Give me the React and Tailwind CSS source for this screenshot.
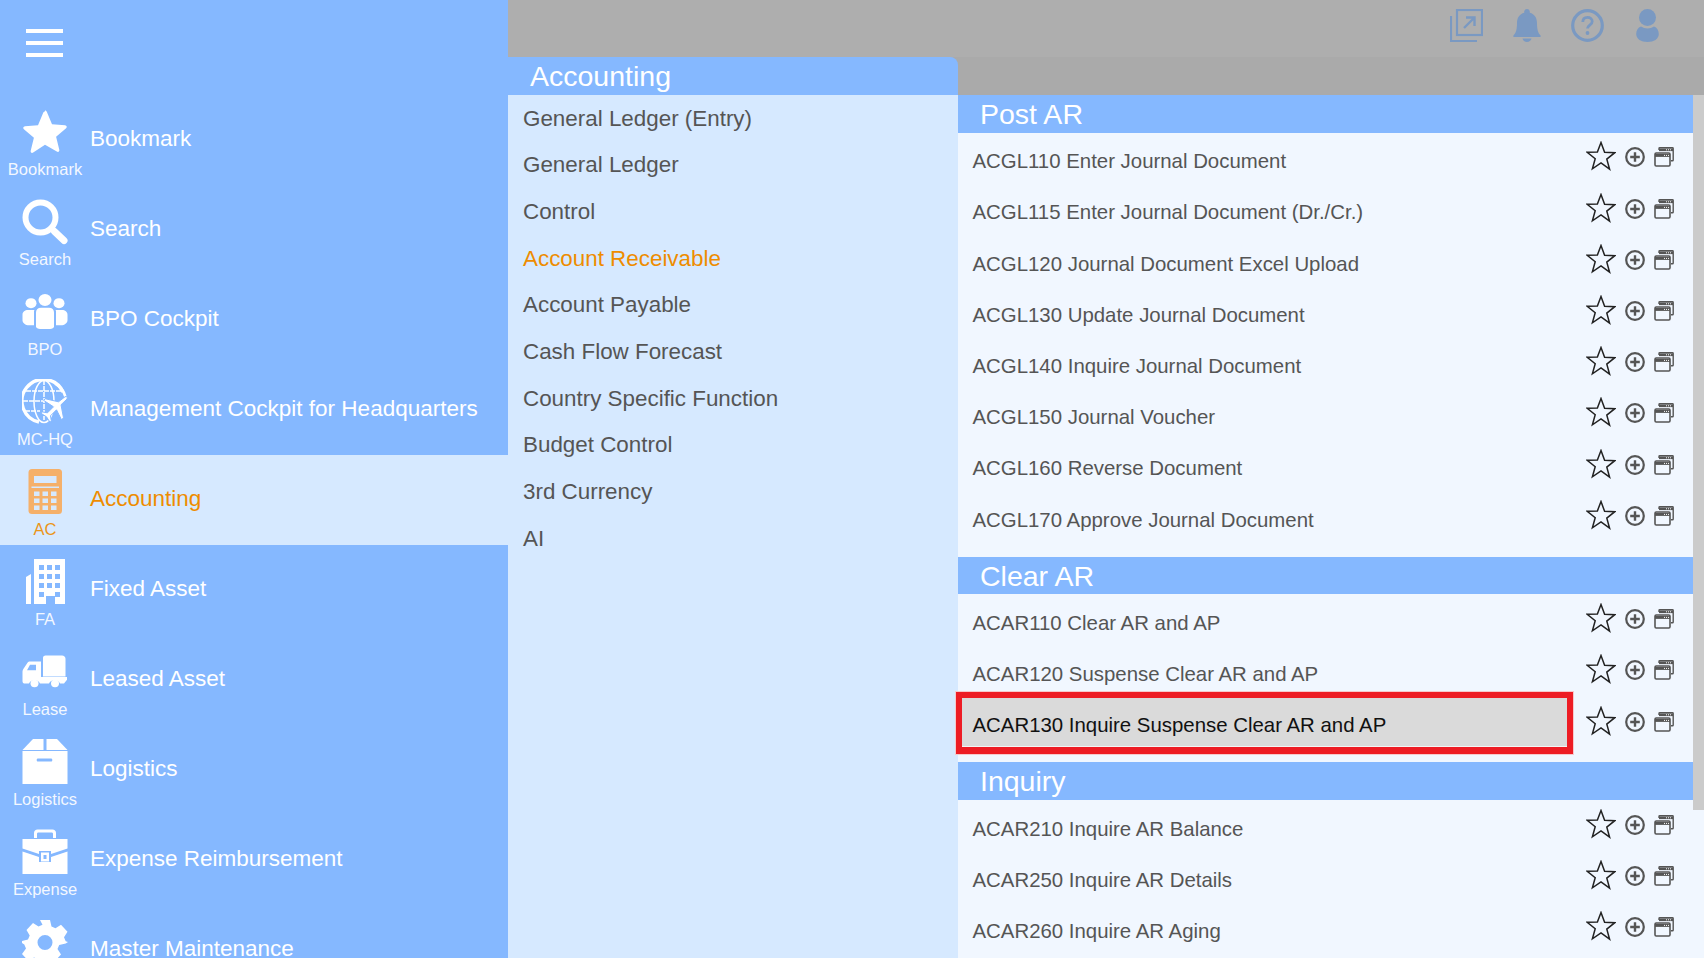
const NAV = [
  { label: "Bookmark", small: "Bookmark", icon: "star" },
  { label: "Search", small: "Search", icon: "search" },
  { label: "BPO Cockpit", small: "BPO", icon: "people" },
  { label: "Management Cockpit for Headquarters", small: "MC-HQ", icon: "globe" },
  { label: "Accounting", small: "AC", icon: "calc", active: true },
  { label: "Fixed Asset", small: "FA", icon: "building" },
  { label: "Leased Asset", small: "Lease", icon: "truck" },
  { label: "Logistics", small: "Logistics", icon: "box" },
  { label: "Expense Reimbursement", small: "Expense", icon: "case" },
  { label: "Master Maintenance", small: "Master", icon: "gear" },
];

const MENU = [
  "General Ledger (Entry)",
  "General Ledger",
  "Control",
  "Account Receivable",
  "Account Payable",
  "Cash Flow Forecast",
  "Country Specific Function",
  "Budget Control",
  "3rd Currency",
  "AI",
];

const SECTIONS = [
  {
    title: "Post AR",
    rows: [
      "ACGL110 Enter Journal Document",
      "ACGL115 Enter Journal Document (Dr./Cr.)",
      "ACGL120 Journal Document Excel Upload",
      "ACGL130 Update Journal Document",
      "ACGL140 Inquire Journal Document",
      "ACGL150 Journal Voucher",
      "ACGL160 Reverse Document",
      "ACGL170 Approve Journal Document",
    ],
  },
  {
    title: "Clear AR",
    rows: ["ACAR110 Clear AR and AP", "ACAR120 Suspense Clear AR and AP", "ACAR130 Inquire Suspense Clear AR and AP"],
  },
  {
    title: "Inquiry",
    rows: ["ACAR210 Inquire AR Balance", "ACAR250 Inquire AR Details", "ACAR260 Inquire AR Aging"],
  },
];

function NavIcon({ name }) {
  const c = "w-[46px] h-[46px] block";
  switch (name) {
    case "star":
      return (
        <svg viewBox="0 0 46 46" className={c} fill="#fff">
          <path d="M23 1.500c1 0 1.600.7 2 1.700l5 12 13 1c1.800.2 2.400 1.800 1.100 3l-10 8.600 3.200 13c.4 1.700-1 2.700-2.500 1.800L23 35.800l-11.800 7.800c-1.500.9-2.900-.1-2.500-1.800l3.200-13-10-8.600c-1.300-1.200-.7-2.800 1.100-3l13-1 5-12c.4-1 1-1.700 2-1.700z" />
        </svg>
      );
    case "search":
      return (
        <svg viewBox="0 0 46 46" className={c} fill="none" stroke="#fff">
          <circle cx="18.500" cy="18.500" r="15" strokeWidth="6" />
          <path d="M32.500 32.500L42 41.500" strokeWidth="7" strokeLinecap="round" />
        </svg>
      );
    case "people":
      return (
        <svg viewBox="0 0 46 46" className={c} fill="#fff">
          <g transform="translate(0,5) scale(1,0.92)">
            <circle cx="9" cy="10" r="5.500" />
            <circle cx="23" cy="6.500" r="6.500" />
            <circle cx="37" cy="10" r="5.500" />
            <path d="M14 20c0-3 2-5 5-5h8c3 0 5 2 5 5v15c0 2-2 3-4 3H18c-2 0-4-1-4-3z" />
            <path d="M11.500 17.500H6c-3 0-5.500 2-5.500 5v6c0 3 3 5.500 6.500 5.500h5V19c0-.6 0-1 .5-1.500z" />
            <path d="M34.500 17.500H40c3 0 5.500 2 5.500 5v6c0 3-3 5.500-6.500 5.500h-5V19c0-.6 0-1-.5-1.500z" />
          </g>
        </svg>
      );
    case "globe":
      return (
        <svg viewBox="0 0 46 46" className={c} fill="none" stroke="#fff">
          <path d="M41 13A21.500 21.500 0 1 0 17 43" strokeWidth="3.400" />
          <path d="M33 4.500A21.500 21.500 0 0 1 43.500 18" strokeWidth="2.600" />
          <ellipse cx="22" cy="22.500" rx="10" ry="21" strokeWidth="1.500" />
          <path d="M22 1v40M4 12h36M1 22h25M3 32h15" strokeWidth="1.500" strokeDasharray="5 1" />
          <path
            d="M45 20c1-1.600-.5-3.200-2-2.200l-6.500 5-13-3-2 1.500 10 6.500-6 6-5-.8-1.500 1.300 5.500 3.500 3.500 5.500 1.300-1.500-.8-5 6-6 5 10 2-2-2.500-13z"
            fill="#fff"
            stroke="#85b8ff"
            strokeWidth="1"
          />
        </svg>
      );
    case "calc":
      return (
        <svg viewBox="0 0 46 46" className={c}>
          <rect x="6.500" y="0" width="33.500" height="45" rx="3.500" fill="#f5b06a" />
          <rect x="12" y="7" width="22.500" height="7" fill="#d6e9ff" />
          <rect x="9.500" y="17.500" width="27.500" height="1.500" fill="#d6e9ff" />
          {[22.5, 29.5, 36.5].map((y) =>
            [12, 20.5, 29].map((x) => <rect key={`${x}-${y}`} x={x} y={y} width="5.500" height="4.500" fill="#d6e9ff" />)
          )}
        </svg>
      );
    case "building":
      return (
        <svg viewBox="0 0 46 46" className={c} fill="#fff">
          <path d="M4 18l5-3v30H4z" />
          <path
            fillRule="evenodd"
            d="M12 0h31v45H33v-8h-9v8H12z M17 6v5h5V6z M25 6v5h5V6z M33 6v5h5V6z M17 15v5h5v-5z M25 15v5h5v-5z M33 15v5h5v-5z M17 24v5h5v-5z M25 24v5h5v-5z M33 24v5h5v-5z M17 33v5h5v-5z M33 33v5h5v-5z"
          />
        </svg>
      );
    case "truck":
      return (
        <svg viewBox="0 0 46 46" className={c} fill="#fff">
          <g transform="translate(0,6) scale(1,0.92)">
            <path d="M21 3c0-1.500 1-2.500 2.500-2.500H40c2 0 3.500 1.500 3.500 3.500v19.500H21z" />
            <path
              fillRule="evenodd"
              d="M8 7h11v17h26v3l-3 4h-4a6 6 0 0 0-11 0H18a6 6 0 0 0-11 0H3c-1.500 0-2.500-1-2.500-2.500V18c0-1 .3-2 1-3l4-6.500C6 7.500 7 7 8 7zM8 10.500L5 16.500h9v-6z"
            />
            <circle cx="12.500" cy="31" r="4" />
            <circle cx="33" cy="31" r="4" />
          </g>
        </svg>
      );
    case "box":
      return (
        <svg viewBox="0 0 46 46" className={c} fill="#fff">
          <path d="M11 0h10.500v11H.5z" />
          <path d="M24.500 0H35l10.500 11h-21z" />
          <path
            fillRule="evenodd"
            d="M.5 12h45v33H.5zM16 19.500c-.8 0-1.300.5-1.300 1.500s.5 1.500 1.300 1.500h13c.8 0 1.300-.5 1.300-1.500s-.5-1.500-1.300-1.500z"
          />
        </svg>
      );
    case "case":
      return (
        <svg viewBox="0 0 46 46" className={c} fill="#fff">
          <path d="M12 9V4c0-2 1.500-3.500 3.500-3.500h15C32.500.5 34 2 34 4v5h-3V5c0-1-.5-1.500-1.500-1.500h-13C15.500 3.500 15 4 15 5v4z" />
          <path d="M.5 10h45v9.500L29 25v-3H17v3L.5 19.500z" />
          <path fillRule="evenodd" d="M19 23.500h8v9h-8zM21.500 26v4h3v-4z" />
          <path d="M.5 22.500L17 28v5h12v-5l16.500-5.500V45H.5z" />
        </svg>
      );
    default:
      return (
        <svg viewBox="0 0 46 46" className={c} fill="#fff">
          <path
            fillRule="evenodd"
            d="M18 1h10l1.500 6.500 4 1.700 5.500-3.500 6.500 7-3.500 5.500 1.700 4L46 23v0l-2.300 1.500-6.500 1.500-1.700 4 3.500 5.500-6.500 7-5.500-3.500-4 1.700L20.500 46h-3l-1.500-5.800-4-1.700-5.500 3.500-6.500-7L4 29.500l-1.700-4L0 24v-2l6-1.500 1.700-4L4.500 11l6.500-7 5.500 3.500 4-1.700zM23 16a7.500 7.500 0 1 0 0 15 7.500 7.500 0 0 0 0-15z"
          />
        </svg>
      );
  }
}

function RowIcons() {
  return (
    <div className="flex items-start h-[30px] ml-auto mr-[19px] -mt-[10px]">
      <svg viewBox="0 0 30 30" className="w-[30px] h-[30px]" fill="none" stroke="#222" strokeWidth="1.500" strokeLinejoin="miter">
        <path d="M15 1.500l3.600 9.800 10.200.4-8 6.400 2.800 10.100L15 22l-8.600 5.800 2.800-10.100-8-6.400 10.200-.4z" />
      </svg>
      <svg viewBox="0 0 20 20" className="w-[20px] h-[20px] ml-[9px] mt-[6px]" fill="none" stroke="#555" strokeWidth="2.200">
        <circle cx="10" cy="10" r="8.800" />
        <path d="M10 5.200v9.600M5.200 10h9.600" strokeWidth="2.400" />
      </svg>
      <svg viewBox="0 0 20 20" className="w-[20px] h-[20px] ml-[9px] mt-[6px]" fill="none" stroke="#555">
        <path d="M5 3V1.500c0-.4.3-.7.700-.7h12.800c.4 0 .7.300.7.700V13c0 .5-.3.800-.7.800H17" strokeWidth="1.400" />
        <path d="M5 2.800h14" strokeWidth="2.600" />
        <rect x="1" y="6" width="15" height="13" rx="1.200" strokeWidth="1.600" />
        <path d="M1 8.400h15" strokeWidth="3" />
        <path d="M10 8.400h1M12 8.400h1M14 8.400h1M12 2.800h1M14 2.800h1M16 2.800h1" stroke="#fff" strokeWidth="1" />
      </svg>
    </div>
  );
}

function Row({ text, highlighted }) {
  return (
    <div className="relative flex items-center h-[51.2px] pl-[14.500px]">
      {highlighted && (
        <div className="absolute -left-[2px] -top-[8px] w-[617px] h-[62px] border-x-[6px] border-t-[6px] border-b-[7px] border-[#ed1c24] bg-[#dadada] shadow-[inset_0_-1px_0_0_#f4f4f4,0_0_0_1px_#f6c9cc]" />
      )}
      <span className={`relative text-[20.4px] leading-none ${highlighted ? "text-[#111]" : "text-[#555]"}`}>{text}</span>
      <RowIcons />
    </div>
  );
}

function TopIcons() {
  const s = "#7a99c2";
  return (
    <div className="flex items-center h-full justify-end pb-[6px]">
      <svg viewBox="0 0 33 33" className="w-[33px] h-[33px]" fill="none" stroke={s} strokeWidth="2">
        <rect x="7" y="1" width="25" height="25" strokeWidth="2.200" />
        <path d="M1 7v25h26" strokeWidth="2.200" />
        <path d="M14 19l10-10M16 8.500h8.500V17" strokeWidth="2.400" />
      </svg>
      <svg viewBox="0 0 28 33" className="w-[28px] h-[33px] ml-[30px]" fill={s}>
        <path d="M14 0c1.600 0 2.800 1.200 2.800 2.800v1C21.500 5 24 9 24 14c0 6 .8 9.500 3.500 12.500.5.600.300 1.500-.5 1.500H1c-.8 0-1-.9-.5-1.500C3.200 23.500 4 20 4 14c0-5 2.500-9 7.200-10.200v-1C11.200 1.200 12.400 0 14 0z" />
        <path d="M9.500 29.500h9c-.5 2-2.300 3.500-4.500 3.500s-4-1.500-4.500-3.500z" />
      </svg>
      <svg viewBox="0 0 33 33" className="w-[33px] h-[33px] ml-[30px]" fill="none" stroke={s}>
        <circle cx="16.500" cy="16.500" r="14.800" strokeWidth="3.200" />
        <path d="M11.800 13c0-3 2-4.600 4.700-4.600s4.700 1.700 4.700 4c0 3.700-4.700 3.700-4.700 7.100" strokeWidth="2.800" />
        <circle cx="16.500" cy="24" r="1.900" fill={s} stroke="none" />
      </svg>
      <svg viewBox="0 0 23 33" className="w-[23px] h-[33px] ml-[32px] mr-[45px]" fill={s}>
        <circle cx="11.500" cy="8.500" r="8.500" />
        <path d="M5 17.500c2 1.300 4 2 6.500 2s4.500-.7 6.500-2c3 1 4.800 4 4.800 7.500 0 5-5 8-11.300 8S.2 30 .2 25c0-3.500 1.800-6.500 4.800-7.500z" />
      </svg>
    </div>
  );
}

export default function App() {
  return (
    <div className="flex h-[958px] w-[1704px] overflow-hidden font-['Liberation_Sans',Arial,sans-serif]">
      <aside className="w-[508px] shrink-0 bg-[#85b8ff] overflow-hidden">
        <div className="h-[95px] pt-[29px] pl-[26px]">
          <div className="flex flex-col gap-[8px] w-[37px]">
            <div className="h-[4px] bg-white" />
            <div className="h-[4px] bg-white" />
            <div className="h-[4px] bg-white" />
          </div>
        </div>
        {NAV.map((n) => (
          <div key={n.small} className={`flex items-center h-[90px] shrink-0 ${n.active ? "bg-[#d6e9ff] text-[#ee8c00]" : "text-white"}`}>
            <div className="w-[90px] shrink-0 flex flex-col items-center pt-[14px] h-full">
              <NavIcon name={n.icon} />
              <div className="text-[16.500px] leading-[19px] mt-[5px] opacity-90 whitespace-nowrap">{n.small}</div>
            </div>
            <div className="text-[22.500px] leading-none whitespace-nowrap -mt-px">{n.label}</div>
          </div>
        ))}
      </aside>

      <div className="flex-1 flex flex-col min-w-0 bg-[#aaaaaa]">
        <header className="h-[57px] shrink-0 bg-[#aeaeae]">
          <TopIcons />
        </header>
        <div className="flex flex-1 min-h-0">
          <section className="w-[450px] shrink-0 flex flex-col">
            <div className="h-[38px] bg-[#85b8ff] rounded-tr-[8px] pl-[22px] text-[28.500px] leading-[39px] text-white">Accounting</div>
            <div className="flex-1 bg-[#d6e9ff]">
              {MENU.map((m) => (
                <div
                  key={m}
                  className={`flex items-center h-[46.700px] pl-[15px] text-[22.400px] ${m === "Account Receivable" ? "text-[#ee8c00]" : "text-[#555]"}`}
                >
                  {m}
                </div>
              ))}
            </div>
          </section>
          <section className="flex-1 min-w-0 flex flex-col pt-[38px]">
            <div className="flex-1 min-h-0 flex bg-[#f1f7ff]">
              <div className="flex-1 min-w-0">
                {SECTIONS.map((sec) => (
                  <div key={sec.title} className="pb-[11.300px]">
                    <div className="h-[37.500px] bg-[#85b8ff] pl-[22px] text-[28.500px] leading-[38px] text-white">{sec.title}</div>
                    <div className="pt-[3.400px]">
                      {sec.rows.map((r) => (
                        <Row key={r} text={r} highlighted={r.startsWith("ACAR130")} />
                      ))}
                    </div>
                  </div>
                ))}
              </div>
              <div className="w-[11px] shrink-0">
                <div className="h-[715px] bg-[#cbcbcb]" />
              </div>
            </div>
          </section>
        </div>
      </div>
    </div>
  );
}
